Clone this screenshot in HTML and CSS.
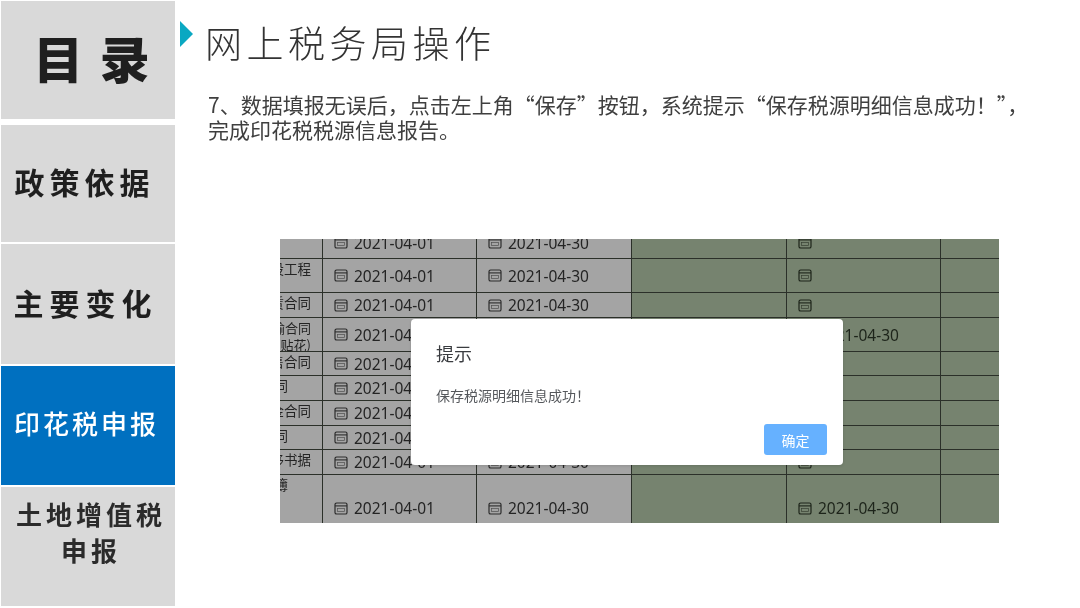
FILE: index.html
```html
<!DOCTYPE html>
<html lang="zh-CN">
<head>
<meta charset="utf-8">
<title>网上税务局操作</title>
<link rel="stylesheet" href="styles.css">
</head>
<body>
<svg class="defs" width="0" height="0" aria-hidden="true">
  <symbol id="cal" viewBox="0 0 14 13">
    <rect x="1" y="1" width="12" height="11" rx="1.6" fill="none" stroke="currentColor" stroke-width="1.2"/>
    <path d="M1 3.9H13" fill="none" stroke="currentColor" stroke-width="1.1"/>
    <rect x="3.5" y="6.4" width="7" height="3" fill="none" stroke="currentColor" stroke-width="0.7" opacity="0.7"/>
  </symbol>
</svg>
<div class="page">
  <nav class="side">
    <div class="tile tile-head">目 录</div>
    <div class="tile tile-lg t2">政策依据</div>
    <div class="tile tile-lg t3">主要变化</div>
    <div class="tile tile-sm active">印花税申报</div>
    <div class="tile tile-sm t5">土地增值税<br>申报</div>
  </nav>
  <main class="main">
    <header class="head">
      <span class="marker"></span>
      <h1 class="title">网上税务局操作</h1>
    </header>
    <p class="desc">7、数据填报无误后，点击左上角“保存”按钮，系统提示“保存税源明细信息成功！”，完成印花税税源信息报告。</p>
    <section class="shot">
      <div class="grid">
        <div class="c name"></div>
        <div class="c date first"><svg class="ic"><use href="#cal"/></svg><span>2021-04-01</span></div>
        <div class="c date first"><svg class="ic"><use href="#cal"/></svg><span>2021-04-30</span></div>
        <div class="c g"></div>
        <div class="c g date first"><svg class="ic"><use href="#cal"/></svg></div>
        <div class="c g end"></div>

        <div class="c name">建设工程</div>
        <div class="c date"><svg class="ic"><use href="#cal"/></svg><span>2021-04-01</span></div>
        <div class="c date"><svg class="ic"><use href="#cal"/></svg><span>2021-04-30</span></div>
        <div class="c g"></div>
        <div class="c g date"><svg class="ic"><use href="#cal"/></svg></div>
        <div class="c g end"></div>

        <div class="c name">租赁合同</div>
        <div class="c date"><svg class="ic"><use href="#cal"/></svg><span>2021-04-01</span></div>
        <div class="c date"><svg class="ic"><use href="#cal"/></svg><span>2021-04-30</span></div>
        <div class="c g"></div>
        <div class="c g date"><svg class="ic"><use href="#cal"/></svg></div>
        <div class="c g end"></div>

        <div class="c name two">运输合同<br>(贴花)</div>
        <div class="c date"><svg class="ic"><use href="#cal"/></svg><span>2021-04-01</span></div>
        <div class="c date"><svg class="ic"><use href="#cal"/></svg><span>2021-04-30</span></div>
        <div class="c g"></div>
        <div class="c g date"><svg class="ic"><use href="#cal"/></svg><span>2021-04-30</span></div>
        <div class="c g end"></div>

        <div class="c name">销售合同</div>
        <div class="c date"><svg class="ic"><use href="#cal"/></svg><span>2021-04-01</span></div>
        <div class="c date"><svg class="ic"><use href="#cal"/></svg><span>2021-04-30</span></div>
        <div class="c g"></div>
        <div class="c g date"><svg class="ic"><use href="#cal"/></svg></div>
        <div class="c g end"></div>

        <div class="c name short">合同</div>
        <div class="c date"><svg class="ic"><use href="#cal"/></svg><span>2021-04-01</span></div>
        <div class="c date"><svg class="ic"><use href="#cal"/></svg><span>2021-04-30</span></div>
        <div class="c g"></div>
        <div class="c g date"><svg class="ic"><use href="#cal"/></svg></div>
        <div class="c g end"></div>

        <div class="c name">资金合同</div>
        <div class="c date"><svg class="ic"><use href="#cal"/></svg><span>2021-04-01</span></div>
        <div class="c date"><svg class="ic"><use href="#cal"/></svg><span>2021-04-30</span></div>
        <div class="c g"></div>
        <div class="c g date"><svg class="ic"><use href="#cal"/></svg></div>
        <div class="c g end"></div>

        <div class="c name short">合同</div>
        <div class="c date"><svg class="ic"><use href="#cal"/></svg><span>2021-04-01</span></div>
        <div class="c date"><svg class="ic"><use href="#cal"/></svg><span>2021-04-30</span></div>
        <div class="c g"></div>
        <div class="c g date"><svg class="ic"><use href="#cal"/></svg></div>
        <div class="c g end"></div>

        <div class="c name">转移书据</div>
        <div class="c date"><svg class="ic"><use href="#cal"/></svg><span>2021-04-01</span></div>
        <div class="c date"><svg class="ic"><use href="#cal"/></svg><span>2021-04-30</span></div>
        <div class="c g"></div>
        <div class="c g date"><svg class="ic"><use href="#cal"/></svg></div>
        <div class="c g end"></div>

        <div class="c name short lastname">账簿</div>
        <div class="c date last"><svg class="ic"><use href="#cal"/></svg><span>2021-04-01</span></div>
        <div class="c date last"><svg class="ic"><use href="#cal"/></svg><span>2021-04-30</span></div>
        <div class="c g"></div>
        <div class="c g date last"><svg class="ic"><use href="#cal"/></svg><span>2021-04-30</span></div>
        <div class="c g end"></div>
      </div>
      <div class="dialog">
        <div class="dlg-title">提示</div>
        <div class="dlg-msg">保存税源明细信息成功！</div>
        <div class="dlg-foot"><button class="dlg-btn" type="button">确定</button></div>
      </div>
    </section>
  </main>
</div>
</body>
</html>
```
FILE: styles.css
```css
* { box-sizing: border-box; }
html, body { margin: 0; padding: 0; background: #fff; }
body { font-family: "Noto Sans CJK SC", "Noto Sans", sans-serif; }
.defs { position: absolute; }
.page { display: flex; width: 1080px; height: 608px; overflow: hidden; filter: blur(0.35px); }

.side {
  width: 175px;
  flex: none;
  padding: 1px 0 0 1px;
  display: grid;
  grid-template-rows: 122px 117px 120px 119px 119px;
  row-gap: 2px;
}
.tile {
  background: #d9d9d9;
  color: #1f1f1f;
  display: flex;
  align-items: center;
  justify-content: center;
  text-align: center;
  white-space: nowrap;
}
.tile-head { margin-bottom: 4px; font-size: 50px; font-weight: 900; line-height: 1; padding: 0 0 6px 7px; word-spacing: 5px; }
.tile-lg { font-size: 30px; font-weight: 700; letter-spacing: 5px; }
.t2 { padding: 0 7px 6px 0; }
.t3 { padding: 0 5px 4px 0; letter-spacing: 6px; }
.tile-sm { font-size: 26px; font-weight: 500; letter-spacing: 3px; line-height: 36px; }
.active { background: #0070c0; color: #fff; padding: 0 3px 6px 0; }
.t5 { align-items: flex-start; padding: 9px 0 0 6px; font-weight: 700; letter-spacing: 4px; color: #2b2b2b; }

.main { flex: 1; min-width: 0; padding: 0 0 0 5px; }
.head { display: flex; align-items: flex-start; height: 83px; }
.marker {
  width: 13px;
  height: 26px;
  margin-top: 21px;
  background: #0aa8c2;
  clip-path: polygon(0 0, 100% 50%, 0 100%);
  flex: none;
}
.title {
  margin: 12px 0 0 12px;
  font-size: 37px;
  font-weight: 300;
  letter-spacing: 4.5px;
  line-height: 60px;
  color: #333;
  white-space: nowrap;
}
.desc {
  margin: 9px 0 0 28px;
  width: 835px;
  font-size: 21px;
  line-height: 25px;
  color: #3f3f3f;
}
.shot {
  position: relative;
  margin: 97px 0 0 100px;
  width: 719px;
  height: 284px;
  overflow: hidden;
}
.grid {
  display: grid;
  grid-template-columns: 43px 154px 155px 155px 154px 58px;
  grid-template-rows: 20px 34px 25px 34px 24px 25px 25px 24px 25px 48px;
  height: 100%;
  color: #242424;
}
.c {
  background: #a4a4a4;
  border-right: 1px solid #2b3029;
  border-bottom: 1px solid #2b3029;
  overflow: hidden;
  min-width: 0;
}
.g { background: #76836f; color: #1d241a; }
.end { border-right: 0; }
.c:nth-last-child(-n+6) { border-bottom: 0; }
.name {
  display: flex;
  justify-content: flex-end;
  padding: 1px 11px 0 0;
  font-size: 13.5px;
  line-height: 16px;
  white-space: nowrap;
}
.two { display: block; text-align: right; padding: 1px 11px 0 0; font-size: 13px; line-height: 17px; direction: rtl; }
.short { padding-right: 34px; }
.date {
  display: flex;
  align-items: center;
  padding-left: 11px;
  gap: 6px;
  font-family: "Noto Sans", sans-serif;
  font-size: 15.5px;
  white-space: nowrap;
}
.first { align-items: flex-start; }
.first > * { margin-top: -3px; }
.first span { margin-top: -6px; line-height: 20px; }
.last { padding-top: 18px; }
.ic { width: 14px; height: 13px; flex: none; color: #2c2c2c; }
.g .ic { color: #1d241a; }

.dialog {
  position: absolute;
  left: 131px;
  top: 80px;
  width: 432px;
  height: 146px;
  background: #fff;
  border-radius: 4px;
  padding: 22px 16px 0 25px;
  box-shadow: 0 1px 3px rgba(0, 0, 0, .12);
}
.dlg-title { font-size: 18px; line-height: 24px; color: #3a3c40; }
.dlg-msg { margin-top: 20px; font-size: 14px; line-height: 20px; color: #55585c; }
.dlg-foot { display: flex; justify-content: flex-end; margin-top: 19px; }
.dlg-btn {
  width: 63px;
  height: 31px;
  border: 0;
  border-radius: 3px;
  padding: 0;
  background: #66b1ff;
  color: #fff;
  font: 14px "Noto Sans CJK SC", sans-serif;
}
```
